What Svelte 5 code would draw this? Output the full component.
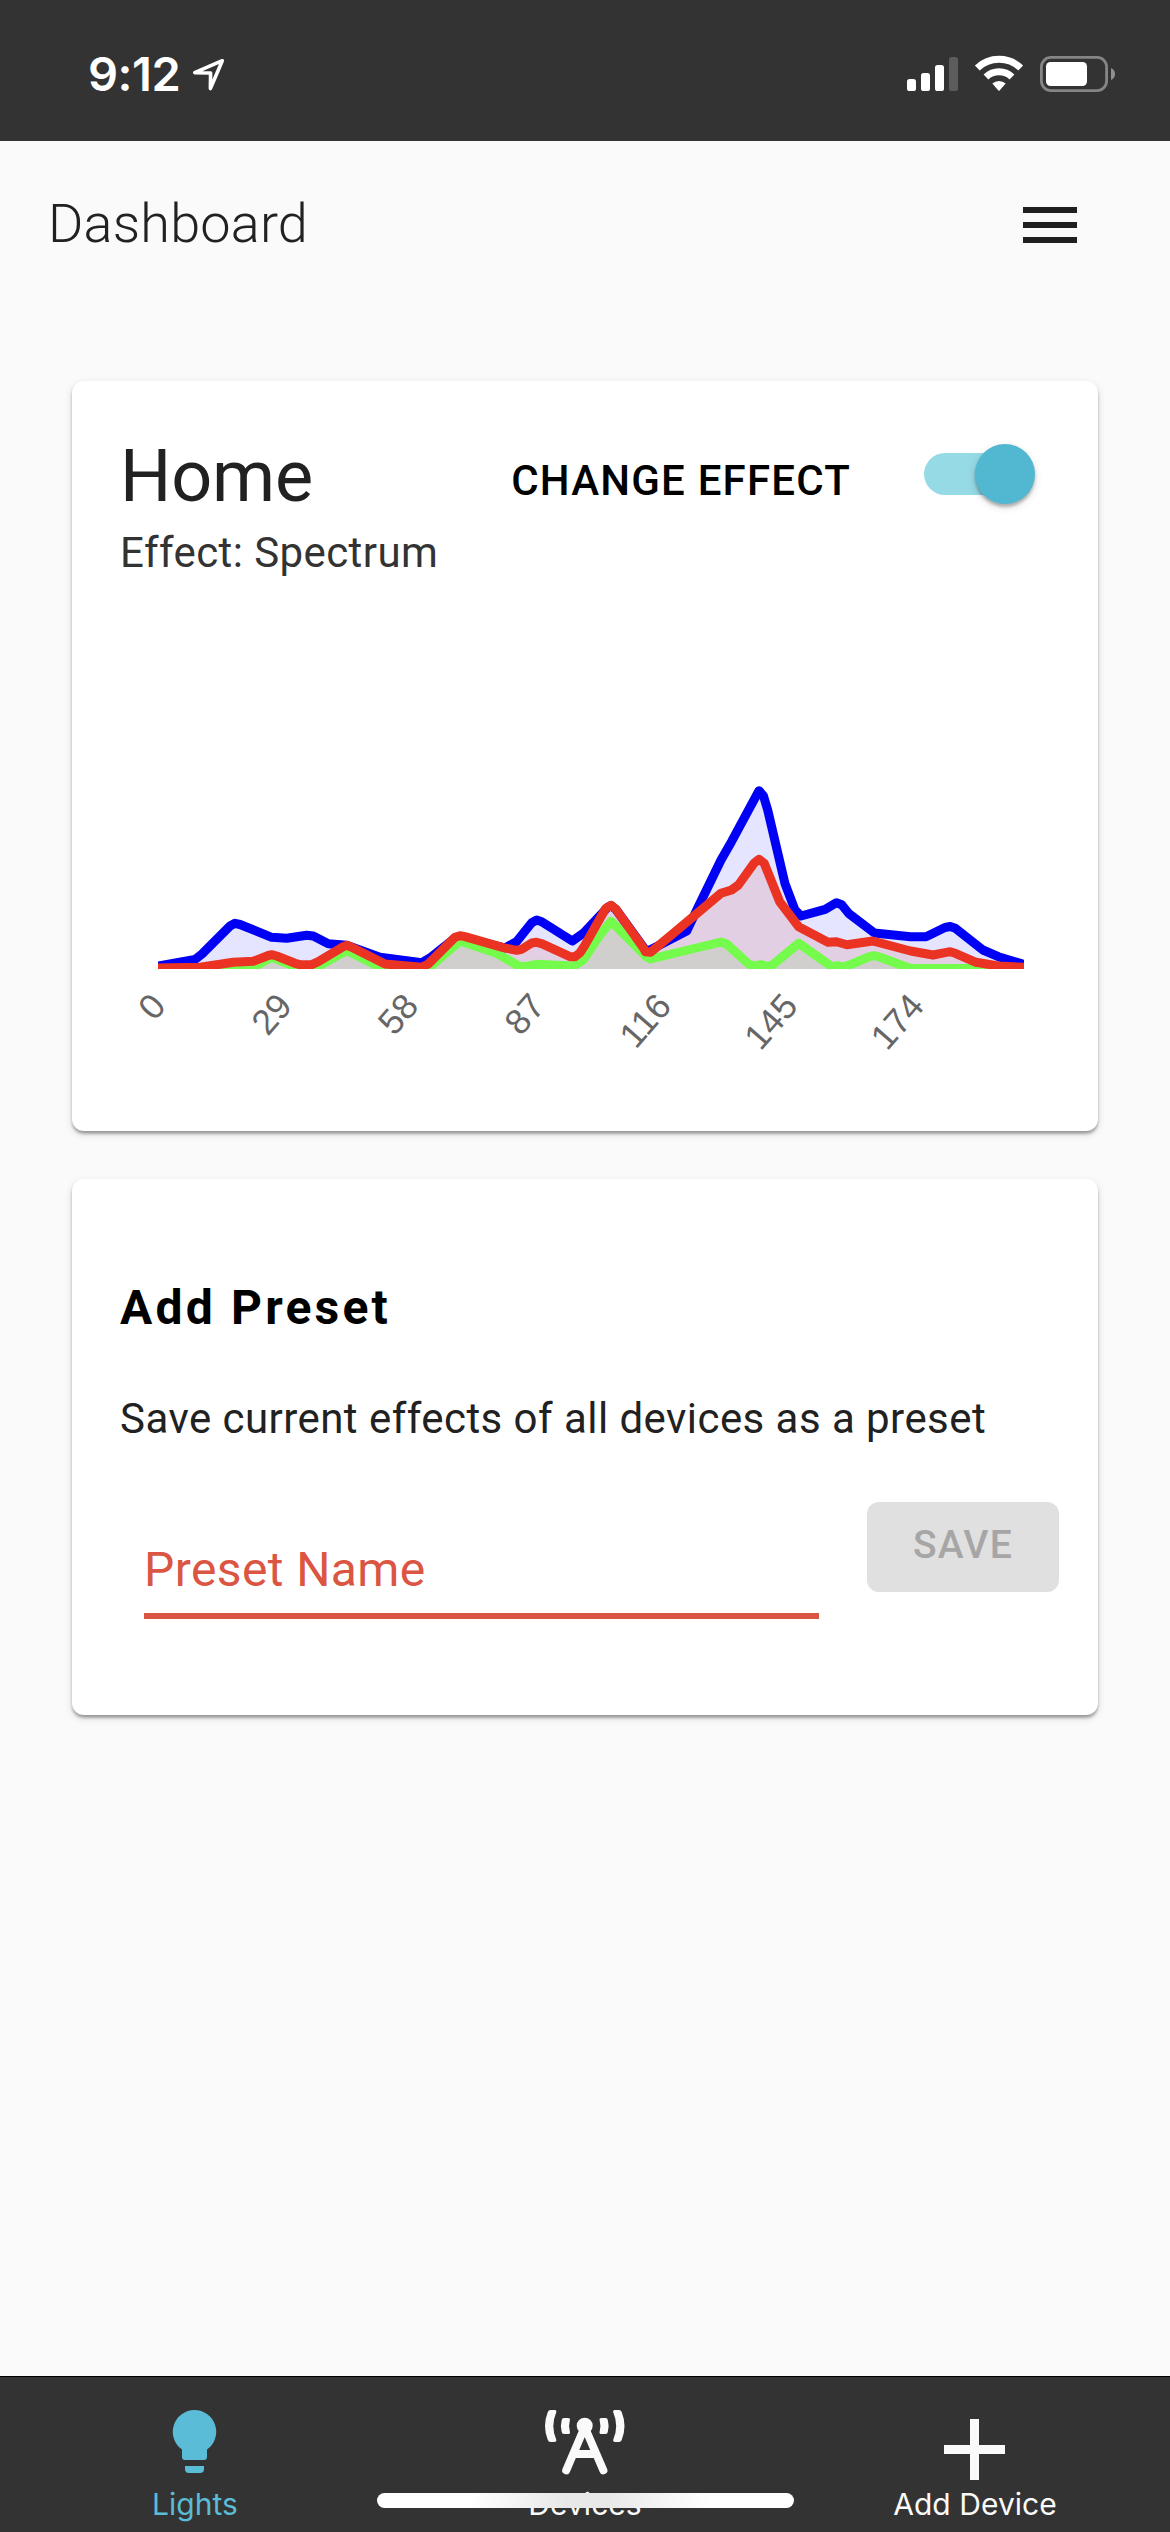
<script>
  const bottom = 969;
  const blue = '158,966 195,959.5 202,954 230,926 235,923.3 240,924.5 271.7,937.3 286.7,938.3 306.7,935.3 313.3,936 328.3,943.7 346.7,945.3 380,957.3 421.7,962.7 430,958 455,938 460,936.5 505,948 516.7,941.5 531.7,922.7 536.7,920 541.7,921.7 572.3,941 583.3,933.3 608,907 611,905.5 616,909.5 645,949.5 649,950.5 686.7,931 698.8,905.7 721,860 731.5,841.7 759,790.7 763.5,796 767.7,810 784.9,883.3 795,910 801,916 825.2,909.3 836.5,902.7 841.7,904.7 848.6,913.3 874.4,933 910.6,936.7 926,936.7 945,927.5 950.2,926.5 955.3,928.3 982.9,950 998.4,956.7 1024,964.5';
  const green = '158,969.5 215,969.5 233,968.5 253,967.5 271.7,957 297,967.5 318,966.5 346.7,950.5 382,968 428,968.5 460,941 496.7,953.3 520,966.7 528.3,966 536.7,964.3 573.3,966 583.3,960 600,935 611,921.3 647,957.3 650.6,959 721,942 726.3,943.7 748.7,964 753.9,966 760.8,964.7 767.7,966.3 772.8,964.7 798.7,943.3 828,964 831.4,966.7 837.6,965.7 843.4,967.3 852,964 869.3,956.7 874.4,955.7 879.6,957 903.7,966 910.6,968.5 1024,968.5';
  const red = '158,968 200,967.3 233.3,962.3 253.3,961.3 268.3,955.5 271.7,954.7 276.7,956 295,963.3 300,964.7 311.7,964.7 318.3,961.7 343.3,946.7 346.7,945.3 351.7,947.3 385,964 421.7,967.3 428.3,964 455,937.3 460,935.7 465,936.7 503.3,947.7 516.7,950.3 521.7,949.3 531.7,943 536.7,942.3 541.7,943.7 570,956.7 575,956.7 580,952.7 585,945 605.8,908.3 611,905.3 616,909.3 643.7,948.3 645.4,951.7 650.6,952.3 683.3,925 721,893.3 731.5,890 738.4,885 753.9,863.3 759,859.3 764.2,863.3 779.7,901.7 798.7,926.7 828,942.3 836.5,941.7 846.9,944.7 872.7,941 910.6,951 933,955 945,952.7 950.2,951.7 955.3,953.3 976,962.3 998.4,966 1024,967.3';

  const series = [
    { name: 'blue', points: blue },
    { name: 'green', points: green },
    { name: 'red', points: red },
  ];
  const fills = [series[0], series[2], series[1]];
  const ticks = [0, 29, 58, 87, 116, 145, 174];
  const area = (points) => `158,${bottom} ${points} 1024,${bottom}`;
</script>

<div class="screen">
  <div class="status">
    <div class="clock">
      <span class="time">9:12</span>
      <svg class="arrow" width="34" height="34" viewBox="191 56 34 34">
        <path d="M222.3 59.7 L194.7 71.6 L210.6 72 L210.4 87.6 Z" />
      </svg>
    </div>
    <svg class="indicators" width="210" height="40" viewBox="906 54 210 40">
      <rect x="907" y="79" width="9" height="12" rx="2.6" />
      <rect x="921" y="73" width="9" height="18" rx="2.6" />
      <rect x="935" y="65" width="9" height="26" rx="2.6" />
      <rect class="off" x="949" y="57" width="9" height="34" rx="2.6" />
      <path class="wave" d="M977.3 68 A31.5 31.5 0 0 1 1020.7 68" />
      <path class="wave" d="M986 77 A19 19 0 0 1 1012 77" />
      <path d="M992.3 83.6 A9.6 9.6 0 0 1 1005.7 83.6 L999.6 90.4 Q999 91 998.4 90.4 Z" />
      <rect class="shell" x="1041.4" y="57.4" width="65.2" height="33.2" rx="9.5" />
      <rect x="1046" y="62" width="41" height="24" rx="4.5" />
      <path class="nub" d="M1111 68 C1116.4 70 1116.4 78 1111 80 Z" />
    </svg>
  </div>

  <header>
    <h1>Dashboard</h1>
    <div class="menu"><i></i><i></i><i></i></div>
  </header>

  <main>
    <section class="card device">
      <div class="head">
        <div class="names">
          <h2>Home</h2>
          <p>Effect: Spectrum</p>
        </div>
        <button class="change">CHANGE EFFECT</button>
        <div class="switch"><div class="thumb"></div></div>
      </div>
      <svg class="chart" width="1026" height="500" viewBox="72 600 1026 500">
        <clipPath id="plot"><rect x="158" y="600" width="866" height="369" /></clipPath>
        <g clip-path="url(#plot)">
          {#each fills as s}
            <polygon class="fill-{s.name}" points={area(s.points)} />
          {/each}
          {#each series as s}
            <polyline class="line-{s.name}" points={s.points} />
          {/each}
        </g>
        {#each ticks as t, i}
          <text transform="translate({158 + i * 126.4} 999) rotate(-49)" dy="0.35em">{t}</text>
        {/each}
      </svg>
    </section>

    <section class="card preset">
      <h3>Add Preset</h3>
      <p>Save current effects of all devices as a preset</p>
      <div class="form">
        <div class="field"><span>Preset Name</span></div>
        <button class="save">SAVE</button>
      </div>
    </section>
  </main>

  <nav>
    <div class="tab active">
      <svg width="84" height="84" viewBox="153 2400 84 84">
        <path d="M194.5 2410 a21.8 21.8 0 0 1 12.5 39.6 V2457 q0 3 -3 3 H185 q-3 0 -3 -3 V2449.6 A21.8 21.8 0 0 1 194.5 2410 Z" />
        <path d="M185 2466 H204 V2469 q0 4 -4 4 H189 q-4 0 -4 -4 Z" />
      </svg>
      <span>Lights</span>
    </div>
    <div class="tab">
      <svg width="84" height="84" viewBox="542 2400 84 84">
        <circle cx="583.7" cy="2425.7" r="8" />
        <path class="leg" d="M583.7 2427 L565.2 2470.4 M583.7 2427 L602.4 2470.4" />
        <path class="bar" d="M572 2454 H596" />
        <path d="M549.5 2410 H553.5 Q556 2410 555.2 2412.5 Q549.4 2426 555.2 2439.5 Q556 2442 553.5 2442 H549.5 Q547.6 2442 546.8 2440 Q541.2 2426 546.8 2412 Q547.6 2410 549.5 2410 Z" />
        <path d="M618 2410 H614 Q611.5 2410 612.3 2412.5 Q618.1 2426 612.3 2439.5 Q611.5 2442 614 2442 H618 Q619.9 2442 620.7 2440 Q626.3 2426 620.7 2412 Q619.9 2410 618 2410 Z" />
        <path d="M563 2418 H567 Q569.4 2418 568.9 2420 Q567.2 2426 568.9 2432 Q569.4 2434 567 2434 H563 Q561 2434 560.7 2432 Q559 2426 560.7 2420 Q561 2418 563 2418 Z" />
        <path d="M604.5 2418 H600.5 Q598.1 2418 598.6 2420 Q600.3 2426 598.6 2432 Q598.1 2434 600.5 2434 H604.5 Q606.5 2434 606.8 2432 Q608.5 2426 606.8 2420 Q606.5 2418 604.5 2418 Z" />
      </svg>
      <span>Devices</span>
    </div>
    <div class="tab">
      <svg width="84" height="84" viewBox="933 2400 84 84">
        <path d="M970 2419 h9 v26 h26 v9 h-26 v26 h-9 v-26 h-26 v-9 h26 Z" />
      </svg>
      <span>Add Device</span>
    </div>
    <div class="home-bar"></div>
  </nav>
</div>

<style>
  :global(body) {
    margin: 0;
    background: #fafafa;
  }
  .screen {
    width: 1170px;
    height: 2532px;
    display: flex;
    flex-direction: column;
    overflow: hidden;
    background: #fafafa;
    color: #212121;
    font-family: Roboto, sans-serif;
  }
  h1, h2, h3, p {
    margin: 0;
    font-weight: 400;
    white-space: nowrap;
  }
  button {
    border: 0;
    padding: 0;
    background: none;
    font-family: inherit;
    white-space: nowrap;
  }
  svg {
    display: block;
    flex: none;
  }

  .status {
    height: 141px;
    flex: none;
    box-sizing: border-box;
    padding: 0 54px 0 88px;
    display: flex;
    align-items: center;
    justify-content: space-between;
    background: #333;
    color: #fff;
  }
  .clock {
    display: flex;
    align-items: center;
    gap: 10px;
    padding-top: 6px;
  }
  .time {
    width: 93px;
    font: 600 47px/60px Inter, sans-serif;
    letter-spacing: -0.5px;
    white-space: nowrap;
  }
  .arrow path {
    fill: none;
    stroke: #fff;
    stroke-width: 3.6;
    stroke-linejoin: round;
  }
  .indicators {
    margin-top: 7px;
    fill: #fff;
  }
  .off { fill: #5c5c5c; }
  .wave {
    fill: none;
    stroke: #fff;
    stroke-width: 7;
  }
  .shell {
    fill: none;
    stroke: #858585;
    stroke-width: 2.8;
  }
  .nub { fill: #8f8f8f; }

  header {
    height: 168px;
    flex: none;
    box-sizing: border-box;
    padding: 0 93px 0 48px;
    display: flex;
    align-items: center;
    justify-content: space-between;
  }
  h1 {
    padding-bottom: 3px;
    font-size: 54px;
    font-weight: 300;
    line-height: 60px;
    letter-spacing: 0.2px;
  }
  .menu {
    display: flex;
    flex-direction: column;
    gap: 9px;
  }
  .menu i {
    width: 54px;
    height: 6px;
    background: #1f1f1f;
  }

  main {
    flex: 1;
    padding: 72px 72px 0;
    display: flex;
    flex-direction: column;
    gap: 48px;
  }
  .card {
    flex: none;
    box-sizing: border-box;
    border-radius: 12px;
    background: #fff;
    box-shadow: 0 6px 3px -6px rgba(0, 0, 0, 0.2), 0 3px 3px rgba(0, 0, 0, 0.28), 0 3px 9px rgba(0, 0, 0, 0.12);
  }
  .device { height: 750px; }
  .head {
    height: 219px;
    box-sizing: border-box;
    padding: 0 63px 0 48px;
    display: flex;
    align-items: flex-start;
  }
  .names {
    flex: 1;
    padding-top: 54px;
    display: flex;
    flex-direction: column;
    gap: 4px;
  }
  h2 {
    font-size: 72px;
    line-height: 84px;
    letter-spacing: -0.2px;
  }
  .names p {
    font-size: 42px;
    line-height: 60px;
    letter-spacing: 0.42px;
    color: #333;
  }
  .change {
    margin-top: 70px;
    font-size: 42px;
    font-weight: 500;
    line-height: 60px;
    letter-spacing: 1.2px;
    color: #000;
  }
  .switch {
    position: relative;
    width: 111px;
    height: 60px;
    margin: 63px 0 0 73px;
    display: flex;
    justify-content: flex-end;
  }
  .switch::before {
    content: '';
    position: absolute;
    left: 0;
    top: 9px;
    width: 102px;
    height: 42px;
    border-radius: 21px;
    background: #96dae6;
  }
  .thumb {
    position: relative;
    width: 60px;
    height: 60px;
    border-radius: 50%;
    background: #52b7d1;
    box-shadow: 0 3px 3px rgba(0, 0, 0, 0.24), 0 3px 9px rgba(0, 0, 0, 0.14);
  }
  .chart polyline {
    fill: none;
    stroke-width: 9;
    stroke-linejoin: round;
  }
  .fill-blue { fill: #e5e5ff; }
  .fill-red { fill: #e3cfe3; }
  .fill-green { fill: #d0cfcd; }
  .line-blue { stroke: #0000f5; }
  .line-green { stroke: #75fb4c; }
  .line-red { stroke: #ea3323; }
  .chart text {
    font: 35.5px 'Liberation Sans', sans-serif;
    fill: #666;
    text-anchor: end;
  }

  .preset {
    height: 536px;
    padding: 99px 39px 0 48px;
  }
  h3 {
    font-size: 48px;
    font-weight: 700;
    line-height: 60px;
    letter-spacing: 3.2px;
    color: #000;
  }
  .preset p {
    margin-top: 51px;
    font-size: 42px;
    line-height: 60px;
    letter-spacing: 0.45px;
  }
  .form {
    margin-top: 53px;
    padding-left: 24px;
    display: flex;
    align-items: flex-start;
    justify-content: space-between;
  }
  .field {
    width: 675px;
    height: 117px;
    box-sizing: border-box;
    padding-top: 38px;
    border-bottom: 6px solid #db5543;
    font-size: 48px;
    line-height: 60px;
    letter-spacing: 0.4px;
    color: #db5543;
    white-space: nowrap;
  }
  .save {
    width: 192px;
    height: 90px;
    border-radius: 12px;
    background: #e0e0e0;
    color: #a6a6a6;
    font-size: 39px;
    font-weight: 500;
    letter-spacing: 1.2px;
    line-height: 87px;
    padding-bottom: 3px;
  }

  nav {
    position: relative;
    height: 156px;
    flex: none;
    box-sizing: border-box;
    border-top: 1px solid #000;
    padding-top: 23px;
    display: grid;
    grid-template-columns: repeat(3, 1fr);
    background: #333;
    color: #fafafa;
    fill: #fafafa;
  }
  .tab {
    display: flex;
    flex-direction: column;
    align-items: center;
  }
  .tab span {
    margin-top: 2px;
    font: 400 30px/36px Inter, sans-serif;
    letter-spacing: 0.05px;
    white-space: nowrap;
  }
  .active {
    color: #5abcd6;
    fill: #5abcd6;
  }
  .leg {
    fill: none;
    stroke: #fafafa;
    stroke-width: 8;
    stroke-linecap: round;
  }
  .bar {
    stroke: #fafafa;
    stroke-width: 8;
  }
  .home-bar {
    position: absolute;
    left: 377px;
    top: 116px;
    width: 417px;
    height: 15px;
    border-radius: 8px;
    background: linear-gradient(90deg, #fff 22%, #e8e8e8 45%, #e8e8e8 55%, #fff 80%);
  }
</style>
